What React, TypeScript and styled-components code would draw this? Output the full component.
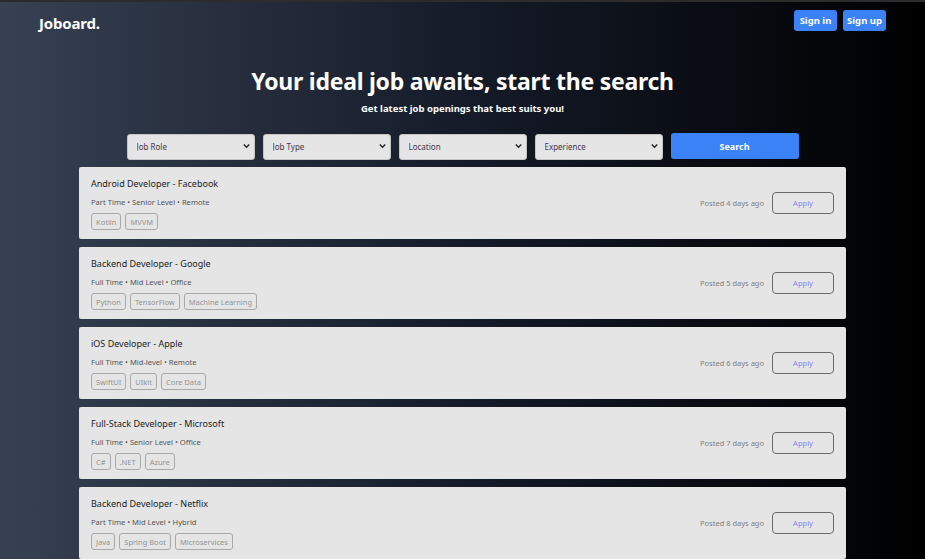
import styled, { createGlobalStyle } from 'styled-components';

const GlobalStyle = createGlobalStyle`
    html, body {
        margin: 0;
        padding: 0;
    }
    body {
        font-family: 'Noto Sans', 'Open Sans', sans-serif;
        background: #000;
    }
`
const Page = styled.div`
    min-height: 559px;
    height: 559px;
    overflow: hidden;
    border-top: 2px solid #2c2c2c;
    box-sizing: border-box;
    background: linear-gradient(to right, #374151 0%, #151b29 50%, #000 100%);
`
const Nav = styled.nav`
    display: flex;
    align-items: center;
    justify-content: space-between;
    padding: 8px 39px 0 39px;
    height: 21px;
`
const Logo = styled.div`
    color: #fff;
    font-weight: 700;
    font-size: 15px;
    letter-spacing: -0.2px;
    margin-top: 4px;
`
const NavButtons = styled.div`
    display: flex;
    gap: 6px;
`
const NavButton = styled.button`
    background: #3b82f6;
    color: #fff;
    border: none;
    border-radius: 3px;
    height: 21px;
    width: 43px;
    padding: 0;
    font-family: inherit;
    font-weight: 700;
    font-size: 9.5px;
`
const Hero = styled.header`
    display: flex;
    flex-direction: column;
    align-items: center;
    padding-top: 35px;
`
const Title = styled.h1`
    margin: 0;
    color: #fff;
    font-size: 23px;
    font-weight: 700;
    line-height: 30px;
    letter-spacing: -0.25px;
`
const Subtitle = styled.p`
    margin: 6px 0 0 0;
    color: #fff;
    font-size: 9.5px;
    font-weight: 700;
    line-height: 14px;
`
const Filters = styled.div`
    display: flex;
    justify-content: center;
    gap: 8px;
    margin-top: 17px;
`
const SelectWrap = styled.div`
    position: relative;
    width: 128px;
    height: 26px;
`
const Select = styled.select`
    appearance: none;
    width: 100%;
    height: 100%;
    background: #e5e5e5;
    border: 1px solid #c4c4c4;
    border-radius: 3px;
    padding: 0 9px;
    font-family: inherit;
    font-size: 8px;
    color: #45354a;
    outline: none;
`
const Chevron = styled.svg`
    position: absolute;
    right: 5px;
    top: 10px;
    width: 7px;
    height: 6px;
    pointer-events: none;
`
const SearchButton = styled.button`
    width: 128px;
    height: 26px;
    background: #3b82f6;
    color: #fff;
    border: none;
    border-radius: 3px;
    font-family: inherit;
    font-weight: 700;
    font-size: 9px;
`
const JobList = styled.div`
    width: 767px;
    margin: 8px auto 0 79px;
    display: flex;
    flex-direction: column;
    gap: 8px;
`
const Card = styled.div`
    background: #e5e5e6;
    border-radius: 2px;
    height: 72px;
    box-sizing: border-box;
    padding: 10px 12px 0 12px;
    display: flex;
    justify-content: space-between;
    align-items: center;
`
const Info = styled.div`
    display: flex;
    flex-direction: column;
    align-self: flex-start;
`
const JobTitle = styled.div`
    font-size: 9px;
    color: #1c1c1c;
    line-height: 13px;
`
const Meta = styled.div`
    font-size: 7.6px;
    color: #555;
    margin-top: 7px;
    line-height: 11px;
`
const Tags = styled.div`
    display: flex;
    gap: 4px;
    margin-top: 5px;
`
const Tag = styled.span`
    border: 1px solid #a9a9a9;
    border-radius: 3px;
    height: 17px;
    box-sizing: border-box;
    padding: 0 4px;
    display: flex;
    align-items: center;
    font-size: 7.5px;
    color: #939393;
`
const Side = styled.div`
    display: flex;
    align-items: center;
    gap: 8px;
    margin-top: -10px;
`
const Posted = styled.span`
    font-size: 7.5px;
    color: #808080;
`
const ApplyButton = styled.button`
    width: 62px;
    height: 22px;
    background: transparent;
    border: 1px solid #6b6b6b;
    border-radius: 4px;
    font-family: inherit;
    font-size: 7.5px;
    color: #7f86f2;
`

const filters = ['Job Role', 'Job Type', 'Location', 'Experience'];

const jobs = [
    { title: 'Android Developer - Facebook', meta: 'Part Time • Senior Level • Remote', tags: ['Kotlin', 'MVVM'], posted: 'Posted 4 days ago' },
    { title: 'Backend Developer - Google', meta: 'Full Time • Mid Level • Office', tags: ['Python', 'TensorFlow', 'Machine Learning'], posted: 'Posted 5 days ago' },
    { title: 'iOS Developer - Apple', meta: 'Full Time • Mid-level • Remote', tags: ['SwiftUI', 'UIkit', 'Core Data'], posted: 'Posted 6 days ago' },
    { title: 'Full-Stack Developer - Microsoft', meta: 'Full Time • Senior Level • Office', tags: ['C#', '.NET', 'Azure'], posted: 'Posted 7 days ago' },
    { title: 'Backend Developer - Netflix', meta: 'Part Time • Mid Level • Hybrid', tags: ['Java', 'Spring Boot', 'Microservices'], posted: 'Posted 8 days ago' },
];

function App() {
    return (
        <>
            <GlobalStyle />
            <Page>
                <Nav>
                    <Logo>Joboard.</Logo>
                    <NavButtons>
                        <NavButton>Sign in</NavButton>
                        <NavButton>Sign up</NavButton>
                    </NavButtons>
                </Nav>
                <Hero>
                    <Title>Your ideal job awaits, start the search</Title>
                    <Subtitle>Get latest job openings that best suits you!</Subtitle>
                </Hero>
                <Filters>
                    {
                        filters.map((f) => (
                            <SelectWrap key={f}>
                                <Select defaultValue={f}>
                                    <option>{f}</option>
                                </Select>
                                <Chevron viewBox="0 0 7 6">
                                    <path d="M0.8 1.5 L3.5 4.3 L6.2 1.5" fill="none" stroke="#222" strokeWidth="1.4" />
                                </Chevron>
                            </SelectWrap>
                        ))
                    }
                    <SearchButton>Search</SearchButton>
                </Filters>
                <JobList>
                    {
                        jobs.map((job) => (
                            <Card key={job.title}>
                                <Info>
                                    <JobTitle>{job.title}</JobTitle>
                                    <Meta>{job.meta}</Meta>
                                    <Tags>
                                        {job.tags.map((t) => <Tag key={t}>{t}</Tag>)}
                                    </Tags>
                                </Info>
                                <Side>
                                    <Posted>{job.posted}</Posted>
                                    <ApplyButton>Apply</ApplyButton>
                                </Side>
                            </Card>
                        ))
                    }
                </JobList>
            </Page>
        </>
    )
}

export default App;
